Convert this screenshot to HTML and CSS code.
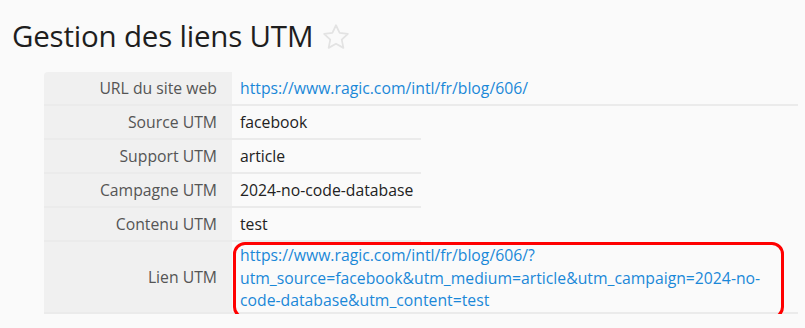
FILE: index.html
```html
<!DOCTYPE html>
<html lang="fr">
<head>
<meta charset="utf-8">
<title>Gestion des liens UTM</title>
<link rel="stylesheet" href="styles.css">
</head>
<body>
<div class="page">
  <h1 class="title">Gestion des liens UTM
    <svg class="star" viewBox="0 0 24 24" width="30" height="30" aria-hidden="true"><path d="M12 2.6l2.9 6.1 6.6.8-4.9 4.6 1.3 6.6L12 17.4l-5.9 3.3 1.3-6.6-4.9-4.6 6.6-.8z" fill="none" stroke="#e3e3e3" stroke-width="1.4" stroke-linejoin="round"/></svg>
  </h1>
  <div class="form">
    <div class="row wide first">
      <div class="label">URL du site web</div>
      <div class="value"><a class="link">https://www.ragic.com/intl/fr/blog/606/</a></div>
    </div>
    <div class="row">
      <div class="label">Source UTM</div>
      <div class="value">facebook</div>
    </div>
    <div class="row">
      <div class="label">Support UTM</div>
      <div class="value">article</div>
    </div>
    <div class="row">
      <div class="label">Campagne UTM</div>
      <div class="value">2024-no-code-database</div>
    </div>
    <div class="row">
      <div class="label">Contenu UTM</div>
      <div class="value">test</div>
    </div>
    <div class="row wide last">
      <div class="label">Lien UTM</div>
      <div class="value multi"><a class="link">https://www.ragic.com/intl/fr/blog/606/?<br>utm_source=facebook&amp;utm_medium=article&amp;utm_campaign=2024-no-<br>code-database&amp;utm_content=test</a>
        <span class="highlight"></span>
      </div>
    </div>
  </div>
</div>
</body>
</html>
```
FILE: styles.css
```css
html, body {
  margin: 0;
  padding: 0;
  background: #fafafa;
}
body {
  font-family: "Open Sans", "Noto Sans", sans-serif;
  color: #222;
}
.page {
  padding: 14px 0 0 12px;
}
.title {
  margin: 0;
  font-size: 29.5px;
  font-weight: 400;
  line-height: 44px;
  color: #1e1e1e;
  display: flex;
  align-items: center;
  gap: 8px;
  letter-spacing: -0.2px;
}
.star {
  display: block;
  margin-top: 2px;
}
.form {
  margin: 14px 0 0 32px;
  display: flex;
  flex-direction: column;
}
.row {
  display: flex;
  width: 377px;
  border-bottom: 2px solid #ebebeb;
  font-size: 15.75px;
}
.row.wide {
  width: 754px;
}
.label {
  width: 188px;
  flex: none;
  box-sizing: border-box;
  background: #f0f0f0;
  text-align: right;
  padding-right: 15px;
  color: #555;
  line-height: 32px;
  display: flex;
  align-items: center;
  justify-content: flex-end;
}
.first .label {
  border-top-left-radius: 4px;
}
.value {
  flex: 1;
  padding-left: 8px;
  line-height: 32px;
  color: #222;
  white-space: nowrap;
}
.link {
  color: #1a88d8;
  text-decoration: none;
}
.value.multi {
  position: relative;
  line-height: 22.6px;
  padding-top: 2px;
}
.highlight {
  position: absolute;
  left: 1px;
  top: 0;
  width: 551px;
  height: 77px;
  box-sizing: border-box;
  border: 3px solid #f00;
  border-radius: 12px;
  pointer-events: none;
}
```
